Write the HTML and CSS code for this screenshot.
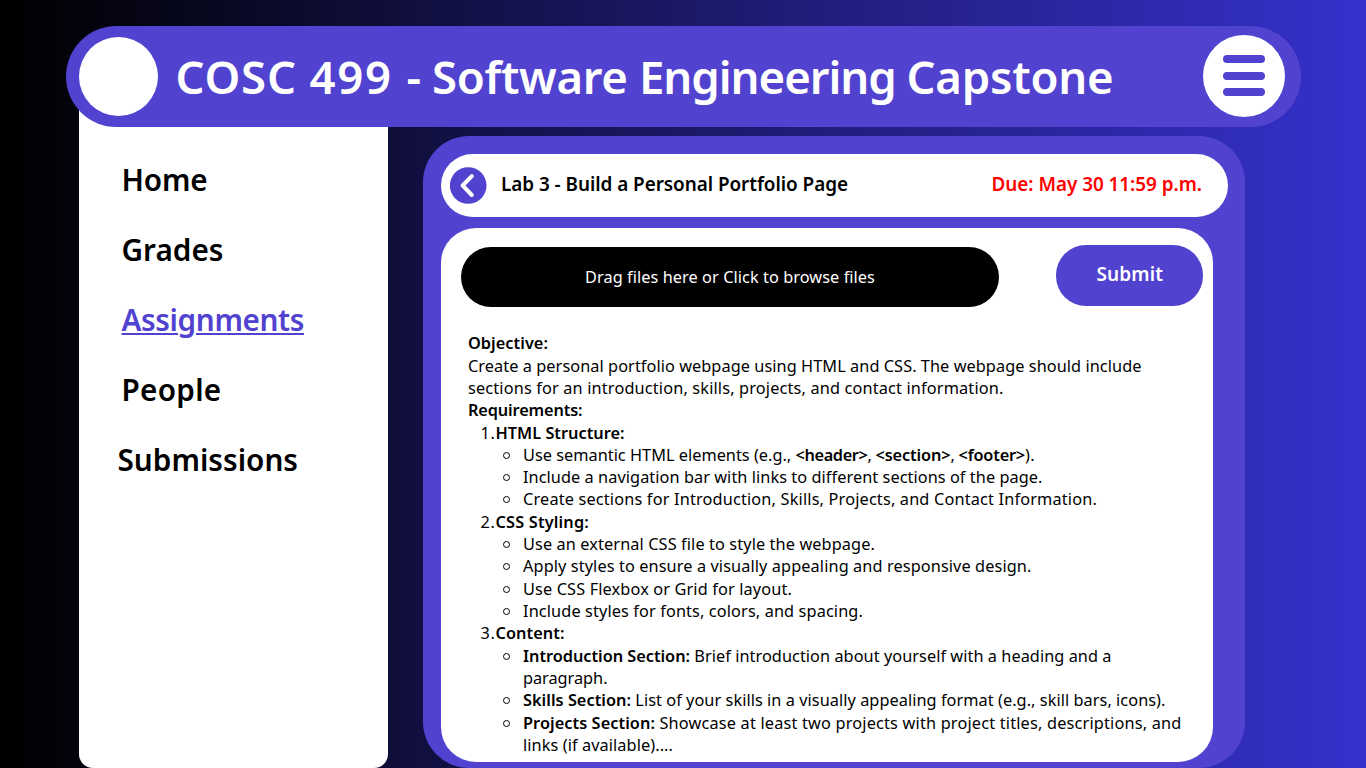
FILE: index.html
```html
<!DOCTYPE html>
<html lang="en">
<head>
<meta charset="utf-8">
<title>COSC 499 - Software Engineering Capstone</title>
<link rel="stylesheet" href="styles.css">
</head>
<body>
<header class="topbar">
  <div class="avatar"></div>
  <h1 class="course"><span data-w="134">COSC </span><span data-w="97">499 </span><span data-w="25.5">- </span><span data-w="207">Software </span><span data-w="267.5">Engineering </span><span data-w="207">Capstone</span></h1>
  <button class="menu" aria-label="Menu"><span></span><span></span><span></span></button>
</header>
<div class="page">
  <nav class="sidebar">
    <a data-w="86">Home</a>
    <a data-w="102">Grades</a>
    <a class="active" data-w="182.5">Assignments</a>
    <a data-w="100">People</a>
    <a class="wide" data-w="180.5">Submissions</a>
  </nav>
  <main class="panel">
    <div class="titlebar">
      <svg class="back" viewBox="0 0 37 37"><circle cx="18.2" cy="18.5" r="18.3"/><path d="M21.8 9.2 L12.6 18.5 L21.8 28"/></svg>
      <h2 class="lab" data-w="347">Lab 3 - Build a Personal Portfolio Page</h2>
      <span class="due" data-w="210.5">Due: May 30 11:59 p.m.</span>
    </div>
    <section class="card">
      <div class="actions">
        <div class="drop"><span data-w="290">Drag files here or Click to browse files</span></div>
        <button class="submit"><span data-w="66.5">Submit</span></button>
      </div>
      <div class="brief">
        <p><b data-w="80">Objective:</b></p>
        <p><span data-w="673.5">Create a personal portfolio webpage using HTML and CSS. The webpage should include</span></p>
        <p><span data-w="535.5">sections for an introduction, skills, projects, and contact information.</span></p>
        <p><b data-w="114.5">Requirements:</b></p>
        <p class="num"><i data-w="15">1.</i><b data-w="129">HTML Structure:</b></p>
        <p class="item"><span data-w="272.5">Use semantic HTML elements (e.g., </span><b data-w="72">&lt;header&gt;</b><span data-w="8">, </span><b data-w="75">&lt;section&gt;</b><span data-w="8">, </span><b data-w="66.5">&lt;footer&gt;</b><span data-w="10">).</span></p>
        <p class="item"><span data-w="519.5">Include a navigation bar with links to different sections of the page.</span></p>
        <p class="item"><span data-w="574">Create sections for Introduction, Skills, Projects, and Contact Information.</span></p>
        <p class="num"><i data-w="15">2.</i><b data-w="93.5">CSS Styling:</b></p>
        <p class="item"><span data-w="352">Use an external CSS file to style the webpage.</span></p>
        <p class="item"><span data-w="508.5">Apply styles to ensure a visually appealing and responsive design.</span></p>
        <p class="item"><span data-w="269">Use CSS Flexbox or Grid for layout.</span></p>
        <p class="item"><span data-w="340">Include styles for fonts, colors, and spacing.</span></p>
        <p class="num"><i data-w="15">3.</i><b data-w="69">Content:</b></p>
        <p class="item"><b data-w="167">Introduction Section:</b><span data-w="421.5"> Brief introduction about yourself with a heading and a</span></p>
        <p class="item cont"><span data-w="84.5">paragraph.</span></p>
        <p class="item"><b data-w="108">Skills Section:</b><span data-w="534.5"> List of your skills in a visually appealing format (e.g., skill bars, icons).</span></p>
        <p class="item"><b data-w="132">Projects Section:</b><span data-w="526.5"> Showcase at least two projects with project titles, descriptions, and</span></p>
        <p class="item cont"><span data-w="150">links (if available)....</span></p>
      </div>
    </section>
  </main>
</div>
<script src="tracking.js"></script>
</body>
</html>
```

FILE: styles.css
```css
*, *::before { box-sizing: border-box; margin: 0; }
body {
  width: 1366px;
  height: 768px;
  overflow: hidden;
  padding-top: 26px;
  background: linear-gradient(90deg, #000 0%, #3531cd 100%);
  font-family: "Noto Sans", "Open Sans", sans-serif;
  color: #000;
}
button { border: 0; font-family: inherit; }
[data-w] { white-space: pre; }

.topbar {
  position: relative;
  z-index: 1;
  display: flex;
  align-items: center;
  width: 1235px;
  height: 101px;
  margin-left: 65.5px;
  padding: 0 15.5px 0 13.5px;
  border-radius: 51px;
  background: #5143d0;
}
.avatar { width: 79px; height: 79px; border-radius: 50%; background: #fff; }
.course {
  display: flex;
  margin-left: 17.5px;
  padding-bottom: 1px;
  font-size: 45.5px;
  font-weight: 600;
  line-height: 60px;
  color: #fff;
}
.menu {
  display: flex;
  flex-direction: column;
  align-items: center;
  justify-content: center;
  gap: 8.5px;
  width: 82px;
  height: 82px;
  margin: 0 0 2px auto;
  padding: 0;
  border-radius: 50%;
  background: #fff;
}
.menu span { width: 41.5px; height: 8px; border-radius: 4px; background: #5143d0; }

.page { display: flex; align-items: flex-start; gap: 35px; padding-left: 79px; }
.sidebar {
  display: flex;
  flex-direction: column;
  align-items: flex-start;
  width: 309px;
  height: 691px;
  margin-top: -50px;
  padding: 67.5px 0 0 42.5px;
  border-radius: 0 0 14px 14px;
  background: #fff;
}
.sidebar a { font-size: 29.7px; font-weight: 600; line-height: 70px; }
.sidebar .active {
  color: #5143d0;
  text-decoration: underline;
  text-decoration-thickness: 2px;
  text-underline-offset: 2px;
}
.sidebar .wide { margin-left: -4px; }

.panel {
  width: 821.5px;
  height: 632px;
  margin-top: 9px;
  padding: 18px 16.5px 0 18px;
  border-radius: 46px;
  background: #5143d0;
}
.titlebar {
  display: flex;
  align-items: center;
  height: 63px;
  padding: 0 26px 0 9px;
  border-radius: 32px;
  background: #fff;
}
.back { width: 37px; height: 37px; }
.back circle { fill: #5143d0; }
.back path { fill: none; stroke: #fff; stroke-width: 4; stroke-linecap: round; stroke-linejoin: round; }
.lab, .due { font-size: 18.9px; font-weight: 600; line-height: 26px; padding-bottom: 3px; }
.lab { margin-left: 14px; }
.due { margin-left: auto; color: #f00; }

.card {
  width: 772px;
  height: 534px;
  margin-top: 10.5px;
  padding: 17.5px 10px 0 20px;
  border-radius: 35px;
  background: #fff;
}
.actions { display: flex; justify-content: space-between; }
.drop, .submit { display: flex; align-items: center; justify-content: center; height: 60.5px; border-radius: 30px; }
.drop { width: 538px; margin-top: 1.5px; background: #000; color: #fff; font-size: 16.3px; }
.submit { width: 147.5px; background: #5143d0; color: #fff; font-size: 19px; font-weight: 600; padding: 0 0 2px 1px; }

.brief { padding: 25.2px 0 0 7px; font-size: 16.3px; line-height: 22.33px; }
.brief p { display: flex; height: 22.33px; }
.brief b { font-weight: 600; }
.brief i { font-style: normal; }
.brief .num { padding-left: 12.5px; }
.brief .item { padding-left: 55px; }
.brief .item:not(.cont)::before {
  content: "";
  flex: none;
  width: 7px;
  height: 7px;
  margin: 8px 13px 0 -20px;
  border: 1px solid #000;
  border-radius: 50%;
}
```

FILE: tracking.js
```js
// Tracks each label out or in to its set width.
document.querySelectorAll("[data-w]").forEach(function (el) {
  var range = document.createRange();
  range.selectNodeContents(el);
  var natural = range.getBoundingClientRect().width;
  el.style.letterSpacing = (el.dataset.w - natural) / el.textContent.length + "px";
});
```
